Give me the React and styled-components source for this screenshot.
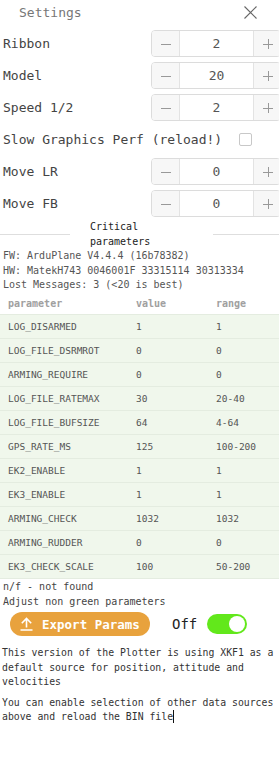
import React from 'react';
import styled, { createGlobalStyle } from 'styled-components';

const GlobalStyle = createGlobalStyle`
  body {
    margin: 0;
    background: #fff;
    overflow-x: hidden;
    font-family: "DejaVu Sans Mono", "Liberation Mono", monospace;
  }
`;

const steppers = [
  { label: 'Ribbon', value: 2 },
  { label: 'Model', value: 20 },
  { label: 'Speed 1/2', value: 2 },
];

const moves = [
  { label: 'Move LR', value: 0 },
  { label: 'Move FB', value: 0 },
];

const params = [
  ['LOG_DISARMED', '1', '1'],
  ['LOG_FILE_DSRMROT', '0', '0'],
  ['ARMING_REQUIRE', '0', '0'],
  ['LOG_FILE_RATEMAX', '30', '20-40'],
  ['LOG_FILE_BUFSIZE', '64', '4-64'],
  ['GPS_RATE_MS', '125', '100-200'],
  ['EK2_ENABLE', '1', '1'],
  ['EK3_ENABLE', '1', '1'],
  ['ARMING_CHECK', '1032', '1032'],
  ['ARMING_RUDDER', '0', '0'],
  ['EK3_CHECK_SCALE', '100', '50-200'],
];

function Stepper({ value }) {
  return (
    <StepBox>
      <StepButton side="left">
        <svg width="10" height="10" viewBox="0 0 10 10">
          <path d="M0 5.5h10" stroke="#999" strokeWidth="1" />
        </svg>
      </StepButton>
      <StepValue>{value}</StepValue>
      <StepButton side="right">
        <svg width="10" height="10" viewBox="0 0 10 10">
          <path d="M0 5.5h10M5.5 0v10" stroke="#999" strokeWidth="1" />
        </svg>
      </StepButton>
    </StepBox>
  );
}

function App() {
  return (
    <Panel>
      <GlobalStyle />
      <Header>
        <Title>Settings</Title>
        <svg width="13" height="13" viewBox="0 0 13 13">
          <path d="M0.5 0.5l12 12M12.5 0.5l-12 12" stroke="#666" strokeWidth="1.1" />
        </svg>
      </Header>

      {steppers.map((s) => (
        <Row key={s.label}>
          <Label>{s.label}</Label>
          <Stepper value={s.value} />
        </Row>
      ))}

      <CheckRow>
        <Label>Slow Graphics Perf (reload!)</Label>
        <Checkbox />
      </CheckRow>

      {moves.map((s) => (
        <Row key={s.label}>
          <Label>{s.label}</Label>
          <Stepper value={s.value} />
        </Row>
      ))}

      <Fieldset>
        <Legend>Critical parameters</Legend>
        <Info>
          <div>FW: ArduPlane V4.4.4 (16b78382)</div>
          <div>HW: MatekH743 0046001F 33315114 30313334</div>
          <div>Lost Messages: 3 (&lt;20 is best)</div>
        </Info>
        <Table>
          <thead>
            <tr>
              <Th width="128">parameter</Th>
              <Th width="80">value</Th>
              <Th>range</Th>
            </tr>
          </thead>
          <tbody>
            {params.map(([name, value, range]) => (
              <Tr key={name}>
                <Td>{name}</Td>
                <Td>{value}</Td>
                <Td>{range}</Td>
              </Tr>
            ))}
          </tbody>
        </Table>
      </Fieldset>

      <Notes>
        <div>n/f - not found</div>
        <div>Adjust non green parameters</div>
      </Notes>

      <Actions>
        <ExportButton>
          <svg width="13" height="14" viewBox="0 0 13 14">
            <path d="M6.5 1.5v9M1.8 6.2l4.7-4.7 4.7 4.7M0.5 13h12" stroke="#fff" strokeWidth="1.6" fill="none" />
          </svg>
          Export Params
        </ExportButton>
        <OffLabel>Off</OffLabel>
        <Toggle>
          <Knob />
        </Toggle>
      </Actions>

      <Para>
        This version of the Plotter is using XKF1 as a default source for position, attitude and velocities
      </Para>
      <Para>
        You can enable selection of other data sources above and reload the BIN file<Caret />
      </Para>
    </Panel>
  );
}

const Panel = styled.div`
  width: 279px;
  color: #444;
`;

const Header = styled.div`
  height: 24px;
  margin-bottom: 6px;
  display: flex;
  align-items: center;
  justify-content: space-between;
  padding: 0 22px 0 19px;
`;

const Title = styled.span`
  font-size: 13px;
  color: #777;
`;

const Row = styled.div`
  display: grid;
  grid-template-columns: 148px 130px;
  align-items: center;
  height: 27px;
  margin-bottom: 5px;
  padding-left: 3px;
`;

const CheckRow = styled.div`
  display: flex;
  align-items: center;
  height: 27px;
  margin-bottom: 5px;
  padding-left: 3px;
`;

const Label = styled.span`
  font-size: 13px;
  color: #444;
  white-space: nowrap;
`;

const Checkbox = styled.span`
  width: 13px;
  height: 13px;
  box-sizing: border-box;
  border: 1px solid #c8c8c8;
  border-radius: 2px;
  margin-left: auto;
  margin-right: 27px;
`;

const StepBox = styled.div`
  display: grid;
  grid-template-columns: 28px 73px 29px;
  height: 27px;
  box-sizing: border-box;
  border: 1px solid #dcdcdc;
  border-radius: 4px;
  overflow: hidden;
`;

const StepButton = styled.div`
  display: flex;
  align-items: center;
  justify-content: center;
  background: #f7f7f7;
  border-right: ${(p) => (p.side === 'left' ? '1px solid #e3e3e3' : 'none')};
  border-left: ${(p) => (p.side === 'right' ? '1px solid #e3e3e3' : 'none')};
`;

const StepValue = styled.div`
  display: flex;
  align-items: center;
  justify-content: center;
  font-size: 13px;
  color: #555;
`;

const Fieldset = styled.fieldset`
  margin: -3px 0 0 0;
  padding: 0;
  border: none;
  border-top: 1px solid #dedede;
  min-width: 0;
`;

const Legend = styled.legend`
  margin-left: 70px;
  padding: 0 20px;
  width: 143px;
  box-sizing: border-box;
  background: #fff;
  font-size: 10px;
  line-height: 15px;
  color: #222;
`;

const Info = styled.div`
  padding: 0 3px;
  font-size: 10px;
  line-height: 14.5px;
  color: #555;
  white-space: nowrap;
`;

const Table = styled.table`
  width: 100%;
  border-collapse: collapse;
`;

const Th = styled.th`
  width: ${(p) => (p.width ? `${p.width}px` : 'auto')};
  height: 22px;
  padding: 0 0 0 8px;
  text-align: left;
  font-size: 10px;
  font-weight: bold;
  color: #a0a0a0;
  box-sizing: border-box;
`;

const Tr = styled.tr`
  height: 24px;
  background: #f0f7ec;
  border-top: 1px solid #e4ece0;
  border-bottom: 1px solid #e4ece0;
`;

const Td = styled.td`
  padding: 0 0 0 8px;
  font-size: 9.5px;
  color: #555;
`;

const Notes = styled.div`
  padding: 0 3px;
  font-size: 10px;
  line-height: 15px;
  color: #444;
`;

const Actions = styled.div`
  display: flex;
  align-items: center;
  padding-left: 10px;
  margin-top: 3px;
`;

const ExportButton = styled.button`
  display: flex;
  align-items: center;
  gap: 9px;
  width: 140px;
  height: 24px;
  padding: 0 0 0 10px;
  border: none;
  border-radius: 12px;
  background: #e8a23d;
  color: #fff;
  font-family: inherit;
  font-size: 12.5px;
  font-weight: bold;
`;

const OffLabel = styled.span`
  margin-left: 22px;
  font-size: 14px;
  color: #222;
`;

const Toggle = styled.div`
  display: flex;
  align-items: center;
  justify-content: flex-end;
  margin-left: 10px;
  width: 40px;
  height: 20px;
  padding: 0 2px;
  box-sizing: border-box;
  border-radius: 10px;
  background: #62e81b;
`;

const Knob = styled.div`
  width: 16px;
  height: 16px;
  border-radius: 50%;
  background: #fff;
`;

const Para = styled.p`
  margin: 10px 0 0;
  padding: 0 2px;
  font-size: 9.8px;
  line-height: 14.5px;
  color: #333;

  & + & {
    margin-top: 6px;
  }
`;

const Caret = styled.span`
  display: inline-block;
  width: 1px;
  height: 13px;
  background: #111;
  vertical-align: -3px;
`;

export default App;
